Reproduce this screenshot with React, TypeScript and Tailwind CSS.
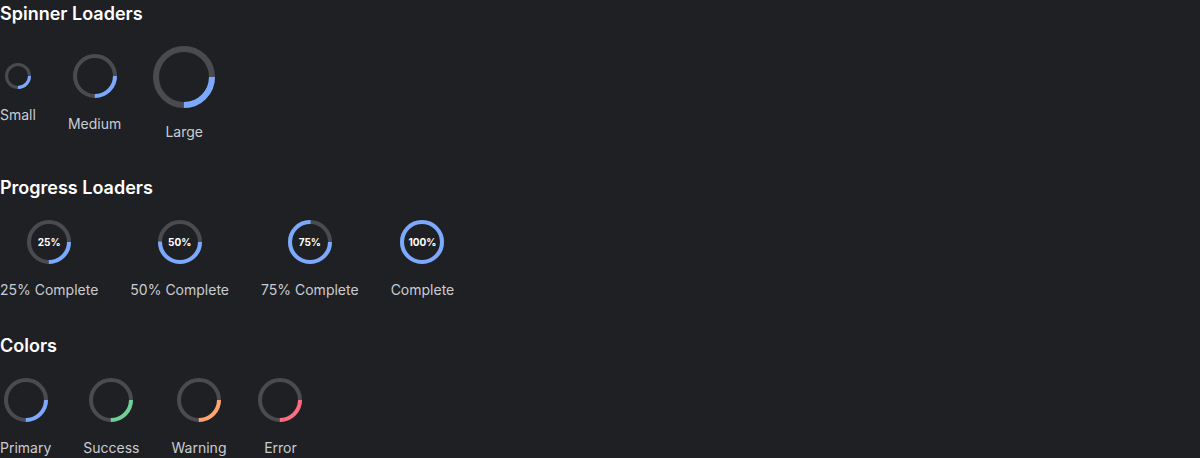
const TRACK = '#4a4b4f';

interface RingProps {
  size: number;
  stroke: number;
  value: number;
  color?: string;
  children?: React.ReactNode;
}

function Ring({ size, stroke, value, color = '#7aa9ff', children }: RingProps) {
  const r = (size - stroke) / 2;
  const c = 2 * Math.PI * r;
  return (
    <div className="relative flex items-center justify-center" style={{ width: size, height: size }}>
      <svg width={size} height={size} viewBox={`0 0 ${size} ${size}`} className="block">
        <circle cx={size / 2} cy={size / 2} r={r} fill="none" stroke={TRACK} strokeWidth={stroke} />
        {value > 0 && (
          <circle
            cx={size / 2}
            cy={size / 2}
            r={r}
            fill="none"
            stroke={color}
            strokeWidth={stroke}
            strokeDasharray={`${c * value} ${c}`}
          />
        )}
      </svg>
      {children && (
        <span className="absolute inset-0 flex items-center justify-center text-[10px] font-bold text-white">
          {children}
        </span>
      )}
    </div>
  );
}

function Item({ label, tight, children }: { label: string; tight?: boolean; children: React.ReactNode }) {
  return (
    <div className={tight ? 'flex flex-col items-center gap-[14px]' : 'flex flex-col items-center gap-4'}>
      {children}
      <span className="text-sm leading-5 text-[#c9cdd3]">{label}</span>
    </div>
  );
}

function Section({ title, children }: { title: string; children: React.ReactNode }) {
  return (
    <section>
      <h2 className="text-lg leading-7 font-semibold text-white mb-[18px]">{title}</h2>
      <div className="flex items-center gap-8">{children}</div>
    </section>
  );
}

export default function App() {
  const progress = [
    { v: 0.25, text: '25%', label: '25% Complete' },
    { v: 0.5, text: '50%', label: '50% Complete' },
    { v: 0.75, text: '75%', label: '75% Complete' },
    { v: 1, text: '100%', label: 'Complete' },
  ];
  const colors = [
    { label: 'Primary', color: '#7aa9ff' },
    { label: 'Success', color: '#6fcf97' },
    { label: 'Warning', color: '#ffa46e' },
    { label: 'Error', color: '#ff6b81' },
  ];

  return (
    <div className="min-h-screen bg-[#1f2024] font-['Inter',sans-serif] flex flex-col gap-8">
      <Section title="Spinner Loaders">
        <Item label="Small">
          <Ring size={26} stroke={3} value={0.25} />
        </Item>
        <Item label="Medium">
          <Ring size={44} stroke={4} value={0.25} />
        </Item>
        <Item label="Large" tight>
          <Ring size={62} stroke={6} value={0.25} />
        </Item>
      </Section>

      <Section title="Progress Loaders">
        {progress.map(p => (
          <Item key={p.label} label={p.label}>
            <Ring size={44} stroke={4} value={p.v}>
              {p.text}
            </Ring>
          </Item>
        ))}
      </Section>

      <Section title="Colors">
        {colors.map(c => (
          <Item key={c.label} label={c.label}>
            <Ring size={44} stroke={4} value={0.25} color={c.color} />
          </Item>
        ))}
      </Section>
    </div>
  );
}
